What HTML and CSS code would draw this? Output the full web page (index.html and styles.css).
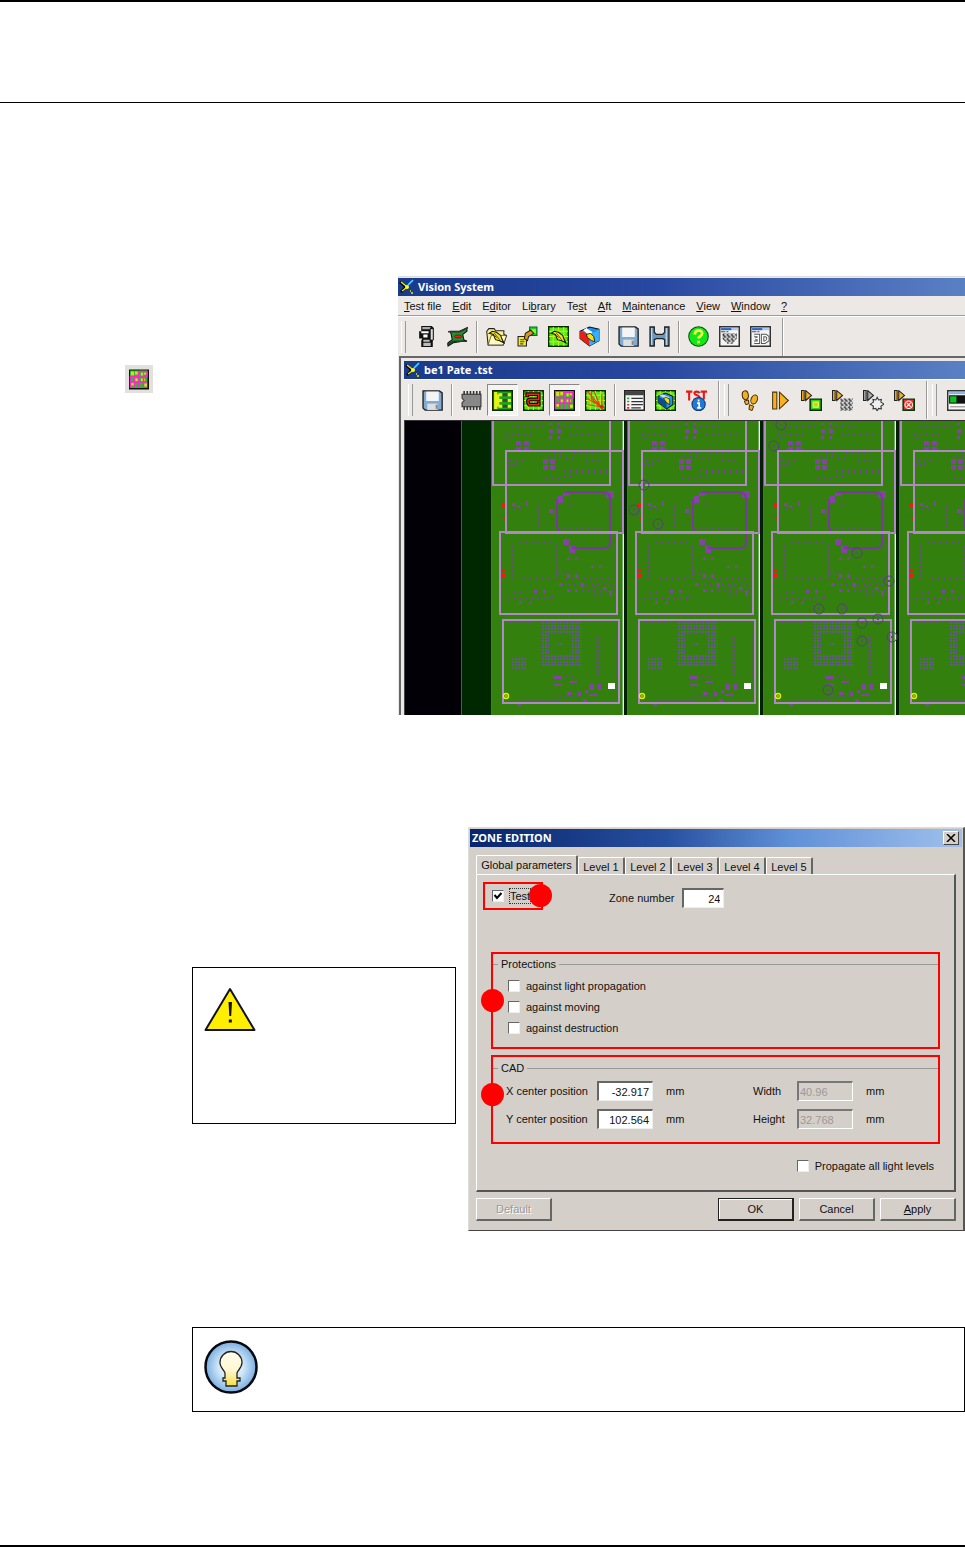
FILE: index.html
```html
<!DOCTYPE html>
<html lang="en">
<head>
<meta charset="utf-8">
<title>Vision System - Zone edition</title>
<link rel="stylesheet" href="styles.css">
</head>
<body>
<svg class="defs" aria-hidden="true">
  <defs>
    <linearGradient id="gBulb" x1="0" y1="0" x2="0" y2="1"><stop offset="0" stop-color="#fffdf0"/><stop offset=".55" stop-color="#fff8d0"/><stop offset="1" stop-color="#f8dc40"/></linearGradient>
    <radialGradient id="gHalo"><stop offset="0" stop-color="#fff"/><stop offset=".5" stop-color="#d0e6f8"/><stop offset="1" stop-color="#78aee0"/></radialGradient>
    <pattern id="pDots" width="3" height="3" patternUnits="userSpaceOnUse"><rect width="2" height="2" fill="#65588a"/></pattern>
    <pattern id="pSpeck" width="4" height="4" patternUnits="userSpaceOnUse"><rect width="4" height="4" fill="#ddd"/><path d="M0 0h1v1h1v1h1v1h-2v-1h-1zM3 0h1v1h-1zM0 3h1v1h-1z" fill="#333"/></pattern>

    <symbol id="i-logo" viewBox="0 0 16 16"><path d="M1 3l6 5-5 5" stroke="#000" stroke-width="2.5" fill="none"/><path d="M8 8l6-6" stroke="#1040c0" stroke-width="3"/><path d="M2 3l5 4M3 12l4-3M12 14h2M11 12h1" stroke="#f0f000" stroke-width="1.4"/><path d="M9 6l5-5" stroke="#40e0ff" stroke-width="1.6"/><circle cx="8" cy="8" r="2" fill="#ffff20"/></symbol>
    <symbol id="i-machine" viewBox="0 0 20 20"><path d="M5 0h10l2 2v11l-1 1v6H5v-6l1-2H3V5h2z" fill="#111"/><path d="M6 1h8l-1 2H6z" fill="#aaa"/><path d="M5 5h7v2H5zM7 8h4v3H7z" fill="#fff"/><path d="M14 3h2v10h-2z" fill="#ddd"/><path d="M7 13h6v2H7zM7 16h7v3H7z" fill="#bbb"/></symbol>
    <symbol id="i-board" viewBox="0 0 20 20"><path d="M3 5h9l7-3v3l-4 3 1 5 2 1-12 2-5 3v-3l4-3-1-5z" fill="#18982c" stroke="#111"/><path d="M1 5.500h11l8-4M0 17.500l6-3h13" stroke="#333" stroke-width="1.500" fill="none"/><ellipse cx="10.500" cy="10" rx="3.500" ry="1.500" fill="#f01818" stroke="#600" stroke-width=".6"/></symbol>
    <symbol id="i-bird" viewBox="0 0 20 20"><path d="M3 7l3-2 4 1 4 3 1 3 2 4-4-2-4-1-2-5z" fill="#f0e020" stroke="#111"/><path d="M8 7l5 6M8 9l2 2" stroke="#333" stroke-width=".8"/></symbol>
    <symbol id="i-open" viewBox="0 0 20 20"><path d="M.7 5l2-2.500h5l1.500 2H17V8l2.500 1-3 9H2z" fill="#f8f090" stroke="#222"/><path d="M2 18l3-9h14.500l-3 9z" fill="#fffac0" stroke="#222" stroke-width=".6"/><use href="#i-bird"/></symbol>
    <symbol id="i-link" viewBox="0 0 20 20"><path d="M12 1h7v8h-7z" fill="#20d020" stroke="#063"/><path d="M14 3h4v4h-4z" fill="#a0f020"/><path d="M1 10h8v9H1z" fill="#f8e828" stroke="#222"/><path d="M3 13h4M3 15h4M3 17h3" stroke="#444"/><path d="M7 12l1-5 5-3 3 3-5 3-1 4z" fill="#d89820" stroke="#222"/></symbol>
    <symbol id="i-grid" viewBox="0 0 20 20"><path d="M.7.700h18.600v18.600H.7z" fill="#58e818" stroke="#0a2a04" stroke-width="1.400"/><path d="M5 1v18M10 1v18M15 1v18M1 5h18M1 10h18M1 15h18" stroke="#b8f818" stroke-width="1"/></symbol>
    <symbol id="i-gridbird" viewBox="0 0 20 20"><use href="#i-grid"/><use href="#i-bird"/></symbol>
    <symbol id="i-books" viewBox="0 0 20 20"><path d="M1 5l9-4 9 2v11l-9 5-9-7z" fill="#1890f0" stroke="#111"/><path d="M1 5l4 1 5 4v9l-9-7z" fill="#e82018"/><path d="M4 4l3-2 6 4-3 3z" fill="#fff"/><path d="M10 9l9-6v11l-9 5z" fill="#38b0f8"/><path d="M7 8l4-1 3 3 1 5-3-1-4-3z" fill="#f0e020" stroke="#111" stroke-width=".8"/></symbol>
    <symbol id="i-disk" viewBox="0 0 20 20"><path d="M1 .8h15.500l2.700 2v16.400H3l-2-2z" fill="#80acd4" stroke="#222" stroke-width="1.300"/><path d="M4 1.500h12v9H4z" fill="#f4f4f4"/><path d="M5 13h10v6H5z" fill="#dcdfe2"/><path d="M13 14h2v4h-2z" fill="#888"/></symbol>
    <symbol id="i-find" viewBox="0 0 20 20"><path d="M1 1h4v5l2 2h6l2-2V1h4v18h-4v-6l-2-1H7l-2 1v6H1z" fill="#6898c0" stroke="#222" stroke-width="1.300"/><path d="M2.500 2v16M16.500 2v16" stroke="#b8d8f0" stroke-width="1.200"/></symbol>
    <symbol id="i-help" viewBox="0 0 20 20"><circle cx="10" cy="10" r="9.300" fill="#10e818" stroke="#174a17"/><path d="M6.500 8c0-5 7-5 7-1 0 3-3.500 2.500-3.500 5M10 14v2.500" stroke="#f8ff50" stroke-width="2.600" fill="none"/></symbol>
    <symbol id="i-window" viewBox="0 0 20 20"><path d="M.7.700h18.600v18.600H.7z" fill="#f4f4f4" stroke="#333" stroke-width="1.400"/><path d="M2 2h10v2H2z" fill="#2860c0"/><path d="M12 2h6v2h-6z" fill="#a8c8e8"/><path d="M2 5.500h4M7 5.500h2" stroke="#444"/></symbol>
    <symbol id="i-winimg" viewBox="0 0 20 20"><use href="#i-window"/><path d="M3 7h14v5l-4 5H8l-5-5z" fill="url(#pSpeck)"/></symbol>
    <symbol id="i-win3d" viewBox="0 0 20 20"><use href="#i-window"/><path d="M4 9h4v6.500H4M5 12h3M12 9v6.500h2l3-2v-3l-2-1.500z" stroke="#555" stroke-width="3.200" fill="none"/><path d="M4 9h4v6.500H4M5 12h3M12 9v6.500h2l3-2v-3l-2-1.500z" stroke="#fff" stroke-width="1.400" fill="none"/></symbol>
    <symbol id="i-chip" viewBox="0 0 20 20"><path d="M3 1v4M6 1v4M9 1v4M12 1v4M15 1v4M18 1v4M3 15v4M6 15v4M9 15v4M12 15v4M15 15v4M18 15v4" stroke="#333" stroke-width="1.500"/><path d="M1 4h18v12H1V12l2-2-2-2z" fill="#888" stroke="#333"/></symbol>
    <symbol id="i-pads" viewBox="0 0 20 20"><path d="M.7.700h18.600v18.600H.7z" fill="#18a818" stroke="#0a2a04" stroke-width="1.400"/><path d="M2 2h3v2l2 1v10l-2 1v2H2z" fill="#e8f018"/><path d="M6 4.500h4M6 10h4M6 15.500h4" stroke="#e8f018" stroke-width="3"/><path d="M10 3h5v3h-5zM10 8.500h5v3h-5zM10 14h5v3h-5z" fill="#444"/><path d="M15 3h3v3h-3zM15 8.500h3v3h-3zM15 14h3v3h-3z" fill="#e8f018"/></symbol>
    <symbol id="i-snake" viewBox="0 0 20 20"><use href="#i-grid"/><path d="M4 7V4h11v5H7c-3 0-3 3-1 5h9v-3" stroke="#200" stroke-width="3.600" fill="none"/><path d="M4 6V4h11v5H7c-3 0-3 3-1 5h9v-2" stroke="#e82818" stroke-width="1.400" fill="none"/></symbol>
    <symbol id="i-zones" viewBox="0 0 20 20"><path d="M0 0h20v20H0z" fill="#111"/><path d="M1 1h17.500v17.500H1z" fill="#28c028"/><path d="M2 2h3v4H2zM6 2h3v3H6zM2 13h3v3H2zM6 9h3v3H6zM12 3h2v3h-2zM15 3h3v2h-3zM12 9h4v3h-4zM15 14h3v3h-3z" fill="#e0d820"/><path d="M1.500 18V7h8V1.500M9.500 2v16M1 12.500h9M5.500 7v11M10 7.500h8.500M10 12.500h8M14.500 8v10M10 2h8v5" stroke="#f828c8" stroke-width="1.500" fill="none"/></symbol>
    <symbol id="i-routes" viewBox="0 0 20 20"><use href="#i-grid"/><path d="M3 2l13 15M9 2l6 15M16 4v12M2 8l14 8M3 14l12 2M6 2v6l8 8" stroke="#f03818" stroke-width="1.100" fill="none"/><circle cx="16" cy="16" r="2" fill="#e02010"/></symbol>
    <symbol id="i-list" viewBox="0 0 20 20"><path d="M.7.700h18.600v18.600H.7z" fill="#f6f6f6" stroke="#222" stroke-width="1.400"/><path d="M1 1h18v4H1z" fill="#444"/><path d="M7 8h11M7 11h11M7 14h11M7 17h9" stroke="#333" stroke-width="1.200"/><path d="M3 8h2M3 11h2" stroke="#20b020" stroke-width="1.500"/><path d="M3 14h2M3 17h2" stroke="#e02020" stroke-width="1.500"/></symbol>
    <symbol id="i-gridbook" viewBox="0 0 20 20"><use href="#i-grid"/><path d="M3 6l7-3 7 3v8l-6 4-8-6z" fill="#2098e8" stroke="#111"/><path d="M3 6l8 5v7l-8-6z" fill="#0c4c90"/><path d="M4 5l3-1 7 3-3 2z" fill="#cde"/><path d="M8 8l3-1 3 2v5l-3-2z" fill="#f0e020" stroke="#111" stroke-width=".7"/></symbol>
    <symbol id="i-tst" viewBox="0 0 20 20"><path d="M0 1.500h6M3 1.500V10M13 3c-1-2-5-2-5 0s5 2 5 4-5 3-5 1M14 1.500h6M17 1.500V9" stroke="#e81818" stroke-width="2" fill="none"/><circle cx="12" cy="13.500" r="6.300" fill="#2078d8" stroke="#103870"/><path d="M12 9v2M10.500 12.500h2v4M10.500 17h4" stroke="#fff" stroke-width="1.600" fill="none"/></symbol>
    <symbol id="i-steps" viewBox="0 0 20 20"><g fill="#f0b020" stroke="#3a2400" stroke-width=".9"><ellipse cx="6" cy="5" rx="2.900" ry="4.200" transform="rotate(-8 6 5)"/><path d="M5 10.500l4-1 .5 3.500-3 1z"/><ellipse cx="14.500" cy="9" rx="3" ry="4.500" transform="rotate(22 14.500 9)"/><path d="M10 14l4 1.500-1.500 4-3-1z"/></g></symbol>
    <symbol id="i-run" viewBox="0 0 20 20"><path d="M2.500 2h4v16h-4zM9 2l8.500 8L9 18z" fill="#f8b020" stroke="#4a3410"/></symbol>
    <symbol id="i-runsm" viewBox="0 0 20 20"><path d="M.5.500h2.500v9.500H.500zM4.500.5l5.500 4.700-5.500 4.800z" fill="#f8b020" stroke="#222"/></symbol>
    <symbol id="i-runzone" viewBox="0 0 20 20"><use href="#i-runsm"/><path d="M8.700 8.700h10.600v10.600H8.700z" fill="#30d020" stroke="#042a04" stroke-width="1.400"/><path d="M11.500 11.500h5v5h-5z" fill="#b0e020" stroke="#f8ff40"/></symbol>
    <symbol id="i-runimg" viewBox="0 0 20 20"><use href="#i-runsm"/><path d="M8 8h12v12H8z" fill="url(#pSpeck)"/></symbol>
    <symbol id="i-runstar" viewBox="0 0 20 20"><path d="M.5.500h2.500v9.500H.500zM4.500.5l5.500 4.700-5.500 4.800z" fill="#aaa" stroke="#222"/><path d="M13.500 7l1.300 2.500 2.700-.5-.5 2.500 3 2-3 2 .5 2.500-2.700-.5-1.300 2.500-1.300-2.500-2.700.5.500-2.500-3-2 3-2-.5-2.500 2.700.5z" fill="#f0f0f0" stroke="#333"/></symbol>
    <symbol id="i-runerr" viewBox="0 0 20 20"><use href="#i-runsm"/><path d="M8.700 8.700h10.600v10.600H8.700z" fill="#e83030" stroke="#063a06" stroke-width="1.400"/><circle cx="14" cy="14" r="3.600" fill="#e83030" stroke="#fff"/><path d="M12 12l4 4M16 12l-4 4" stroke="#fff"/></symbol>
    <symbol id="i-gauge" viewBox="0 0 20 20"><path d="M.7.700h25v18.600H.7z" fill="#f6f6f6" stroke="#333" stroke-width="1.400"/><path d="M2 2h18v2H2z" fill="#88b0e0"/><path d="M2 5h18v8H2z" fill="#111"/><path d="M3 6h6v6H3z" fill="#10c020"/><path d="M3 16h16" stroke="#888"/></symbol>

    <g id="panel">
      <path d="M1 0h131v294H1z" fill="#33800f"/>
      <path d="M0 0h1v294H0z" fill="#109c10"/>
      <path d="M131 0h1v294h-1z" fill="#78a868"/>
      <path d="M133 0h3v294h-3z" fill="#032006"/>
      <g fill="none" stroke="#764496" stroke-width="2">
        <g stroke-dasharray="1 2">
          <path d="M18 5h34M15 13h30M67 6h28M14 17h9M80 31h24M16 39h20M75 37h12M92 40h19M57 35h16M70 55h12M60 31h14M52 57h20"/>
          <path d="M29 121h32M30 158h30M20 171h14M58 175h8M64 151h10M100 166h8M100 173h14M20 87h12M76 83h8M16 202h22M60 256h26"/>
        </g>
        <g stroke-dasharray="1 5">
          <path d="M70 11h48M76 18h40M72 25h44M79 14h36M68 44h50M73 49h45M79 52h38M66 61h50M52 64h18M76 71h36M74 91h14M76 99h12M73 107h42"/>
          <path d="M72 133h50M76 139h44M70 147h50M75 157h46M71 164h50M79 170h44M17 178h48M92 181h30M96 128h24M102 151h20M24 28h24M14 61h38M18 98h40M50 103h16M86 187h32"/>
        </g>
        <g stroke-dasharray="1 3">
          <path d="M17 44h12M16 52h23M18 58h15M24 72h14M30 80h8M82 84h20M41 42v24M41 74v32M57 70v22M62 78v18M86 88v22M112 88v22M104 88h4M48 85v22"/>
          <path d="M22 125v34M66 125v34M16 206v8M16 236h20M118 146v32M106 130v40M72 150v34M78 160h16M94 178h18M28 88v22M33 74v14M44 168v12M38 216v16M98 212v24"/>
          <path d="M18 48h22M70 124v40M90 126v60M96 134v48M112 132v50M124 150v40M54 164v18M34 172v12"/>
        </g>
        <g stroke-width="3" stroke-dasharray="2 2"><path d="M107 216v41M127 214v43"/></g>
        <path d="M30 279h38M66 275h22M94 281h26" stroke-width="1" stroke-dasharray="2 1"/>
      </g>
      <path d="M50 200h41v45H50z" fill="url(#pDots)"/><path d="M58 212h22v22H58z" fill="#33800f"/><path d="M66 221h6v3h-6z" fill="url(#pDots)"/>
      <path d="M20 236h15v12H20z" fill="url(#pDots)"/>
      <g fill="#8444a4">
        <path d="M25 20h5v4h-5zM33 20h5v4h-5zM25 26h5v3h-5zM33 26h5v3h-5zM58 8h4v4h-4zM66 8h4v4h-4zM58 15h3v3h-3zM66 15h3v3h-3zM58 2h3v2h-3zM66 2h3v2h-3zM52 38h5v5h-5zM59 38h5v5h-5zM52 44h5v5h-5zM59 44h5v5h-5z"/>
        <path d="M72 70h6v5h-6zM66 75h6v7h-6zM115 70h8v7h-8zM72 118h6v6h-6zM78 125h6v7h-6zM58 88h4v4h-4zM21 82h4v3h-4zM27 84h2v3h-2zM35 80h2v5h-2z"/>
        <path d="M76 136h3v3h-3zM84 136h3v3h-3zM76 153h3v4h-3zM84 153h3v4h-3zM68 162h3v3h-3zM76 168h3v3h-3zM84 168h3v3h-3zM100 144h3v3h-3zM108 144h3v3h-3zM43 169h3v3h-3zM52 169h3v3h-3zM112 166h3v3h-3zM118 170h3v5h-3zM90 162h3v4h-3zM28 180h3v3h-3zM38 181h3v2h-3z"/>
        <path d="M63 255h8v3h-8zM63 263h8v2h-8zM78 260h8v2h-8zM99 263h4v6h-4zM107 263h3v6h-3zM76 271h4v3h-4zM87 271h3v4h-3zM98 273h8v2h-8zM92 278h4v3h-4zM94 269h3v3h-3zM26 283h4v2h-4z"/>
      </g>
      <path d="M73 71H112q7 0 7 7v44q0 5-5 5H81M66 78v28l3 6" fill="none" stroke="#7c38a0" stroke-width="2"/>
      <g fill="none" stroke="#b088c4" stroke-width="2">
        <path d="M2 0v64h117V0"/>
        <rect x="15" y="30" width="117" height="82"/>
        <rect x="9" y="111" width="117" height="82"/>
        <rect x="12" y="199" width="116" height="83"/>
      </g>
      <path d="M15 111h112v2H15z" fill="#b088c4"/>
      <path d="M10 82h4v4h-4zM10 93h1v3h-1zM13 96h1v3h-1zM11 148h3v3h-3zM11 153h3v3h-3z" fill="#f01818"/>
      <path d="M117 262h7v6h-7z" fill="#fff"/>
      <circle cx="15" cy="275" r="2.500" fill="none" stroke="#e8f000" stroke-width="1.400"/><path d="M14 275h2" stroke="#e8f000"/>
    </g>
    <g id="fid"><circle r="5" fill="none" stroke="#554080"/><path d="M-1 0h2" stroke="#6c4488" stroke-width="2"/></g>
  </defs>
</svg>

<div class="page">
  <header class="page-head"></header>
  <main class="content">
    <section class="row">
      <aside class="margin-note"><span class="margin-icon"><svg width="21" height="21"><use href="#i-zones"/></svg></span></aside>
      <div class="app">
        <div class="titlebar"><svg width="16" height="16"><use href="#i-logo"/></svg><span>Vision System</span></div>
        <nav class="menu">
          <button type="button"><u>T</u>est file</button><button type="button"><u>E</u>dit</button><button type="button">E<u>d</u>itor</button><button type="button">Li<u>b</u>rary</button><button type="button">Te<u>s</u>t</button><button type="button"><u>A</u>ft</button><button type="button"><u>M</u>aintenance</button><button type="button"><u>V</u>iew</button><button type="button"><u>W</u>indow</button><button type="button"><u>?</u></button>
        </nav>
        <div class="toolbar">
          <i class="grip"></i>
          <button type="button" aria-label="Machine"><svg><use href="#i-machine"/></svg></button>
          <button type="button" aria-label="Board"><svg><use href="#i-board"/></svg></button>
          <i class="sep"></i>
          <button type="button" aria-label="Open"><svg><use href="#i-open"/></svg></button>
          <button type="button" aria-label="Import"><svg><use href="#i-link"/></svg></button>
          <button type="button" aria-label="Edit board"><svg><use href="#i-gridbird"/></svg></button>
          <button type="button" aria-label="Library"><svg><use href="#i-books"/></svg></button>
          <i class="sep"></i>
          <button type="button" aria-label="Save"><svg><use href="#i-disk"/></svg></button>
          <button type="button" aria-label="Find"><svg><use href="#i-find"/></svg></button>
          <i class="sep"></i>
          <button type="button" aria-label="Help"><svg><use href="#i-help"/></svg></button>
          <button type="button" aria-label="Image window"><svg><use href="#i-winimg"/></svg></button>
          <button type="button" aria-label="3D window"><svg><use href="#i-win3d"/></svg></button>
          <i class="sep sep-end"></i>
        </div>
        <div class="child">
          <div class="titlebar"><svg width="16" height="16"><use href="#i-logo"/></svg><span>be1 Pate .tst</span></div>
          <div class="toolbar toolbar-child">
            <i class="grip"></i>
            <button type="button" aria-label="Save test"><svg><use href="#i-disk"/></svg></button>
            <i class="sep"></i>
            <button type="button" aria-label="Component"><svg><use href="#i-chip"/></svg></button>
            <button type="button" class="pressed" aria-label="Pads"><svg><use href="#i-pads"/></svg></button>
            <button type="button" aria-label="Path"><svg><use href="#i-snake"/></svg></button>
            <button type="button" class="pressed" aria-label="Zones"><svg><use href="#i-zones"/></svg></button>
            <button type="button" aria-label="Routes"><svg><use href="#i-routes"/></svg></button>
            <i class="sep"></i>
            <button type="button" aria-label="List"><svg><use href="#i-list"/></svg></button>
            <button type="button" aria-label="Board library"><svg><use href="#i-gridbook"/></svg></button>
            <button type="button" aria-label="Test information"><svg><use href="#i-tst"/></svg></button>
            <i class="sep sep-end"></i><i class="grip"></i>
            <button type="button" aria-label="Step"><svg><use href="#i-steps"/></svg></button>
            <button type="button" aria-label="Run"><svg><use href="#i-run"/></svg></button>
            <button type="button" aria-label="Run zone"><svg><use href="#i-runzone"/></svg></button>
            <button type="button" aria-label="Run image"><svg><use href="#i-runimg"/></svg></button>
            <button type="button" aria-label="Run star"><svg><use href="#i-runstar"/></svg></button>
            <button type="button" aria-label="Run errors"><svg><use href="#i-runerr"/></svg></button>
            <i class="sep sep-end"></i><i class="grip"></i>
            <button type="button" aria-label="Progress"><svg><use href="#i-gauge"/></svg></button>
          </div>
          <svg class="board" role="img" aria-label="Board view">
            <path d="M0 0h56v294H0z" fill="#020006"/><path d="M57 0h29v294H57z" fill="#002800"/><path d="M56 0h1v294h-1z" fill="#108810"/>
            <use href="#panel" x="86"/><use href="#panel" x="222"/><use href="#panel" x="358"/><use href="#panel" x="494"/>
            <use href="#fid" x="229" y="89"/><use href="#fid" x="253" y="103"/><use href="#fid" x="239" y="64"/>
            <use href="#fid" x="376" y="4"/><use href="#fid" x="369" y="25"/><use href="#fid" x="452" y="132"/><use href="#fid" x="484" y="160"/><use href="#fid" x="414" y="188"/><use href="#fid" x="437" y="188"/><use href="#fid" x="457" y="202"/><use href="#fid" x="473" y="198"/><use href="#fid" x="457" y="220"/><use href="#fid" x="487" y="216"/><use href="#fid" x="423" y="269"/>
          </svg>
        </div>
      </div>
    </section>

    <section class="row row-dialog">
      <aside class="note note-warning">
        <svg width="54" height="46" viewBox="0 0 54 46" role="img" aria-label="Warning"><path d="M26 2L50.500 43H1.500z" fill="#ffee00" stroke="#10102a" stroke-width="2" stroke-linejoin="round"/><path d="M24.500 15h3.500l-.8 14h-1.900zM24.800 32.500h3v3h-3z" fill="#111"/></svg>
      </aside>
      <form class="dialog">
        <div class="titlebar titlebar-dialog"><span>ZONE EDITION</span><button type="button" class="close" aria-label="Close"><svg width="10" height="8" viewBox="0 0 10 8"><path d="M1 0l8 8M9 0L1 8" stroke="#000" stroke-width="1.500"/></svg></button></div>
        <div class="tabs">
          <button type="button" class="tab tab-active">Global parameters</button><button type="button" class="tab">Level 1</button><button type="button" class="tab">Level 2</button><button type="button" class="tab">Level 3</button><button type="button" class="tab">Level 4</button><button type="button" class="tab">Level 5</button>
        </div>
        <div class="sheet">
          <div class="top-line">
            <div class="callout callout-test"><label class="check"><input type="checkbox" checked><span class="focus">Test</span></label><b class="dot dot-right"></b></div>
            <label class="zone" for="zone">Zone number</label><input class="field field-short" id="zone" value="24">
          </div>
          <div class="callout callout-protect">
            <fieldset><legend>Protections</legend>
              <div class="checks">
                <label class="check"><input type="checkbox"><span>against light propagation</span></label>
                <label class="check"><input type="checkbox"><span>against moving</span></label>
                <label class="check"><input type="checkbox"><span>against destruction</span></label>
              </div>
            </fieldset><b class="dot"></b>
          </div>
          <div class="callout callout-cad">
            <fieldset><legend>CAD</legend>
              <div class="cad">
                <label for="cx">X center position</label><input class="field" id="cx" value="-32.917"><span>mm</span><label for="w">Width</label><input class="field" id="w" value="40.96" disabled><span>mm</span>
                <label for="cy">Y center position</label><input class="field" id="cy" value="102.564"><span>mm</span><label for="h">Height</label><input class="field" id="h" value="32.768" disabled><span>mm</span>
              </div>
            </fieldset><b class="dot"></b>
          </div>
          <label class="check propagate"><input type="checkbox"><span>Propagate all light levels</span></label>
        </div>
        <div class="actions">
          <button type="button" class="btn btn-default" disabled>Default</button>
          <button type="button" class="btn btn-ok">OK</button><button type="button" class="btn">Cancel</button><button type="button" class="btn"><u>A</u>pply</button>
        </div>
      </form>
    </section>

    <aside class="note note-tip">
      <svg width="54" height="54" viewBox="0 0 54 54" role="img" aria-label="Tip"><circle cx="27" cy="27" r="25.500" fill="url(#gHalo)" stroke="#080810" stroke-width="2.500"/><path d="M21 38v-5c0-2-5-5-5-10.500a11 11 0 0 1 22 0c0 5.500-5 8.500-5 10.500v5h3v3h-3v5H22v-5h-3v-3z" fill="url(#gBulb)" stroke="#222" stroke-width="1.300"/></svg>
    </aside>
  </main>
</div>
</body>
</html>
```
FILE: styles.css
```css
* { box-sizing: border-box; }
body { margin: 0; background: #fff; color: #111; font: 11px/14px "Liberation Sans", Arial, sans-serif; }
button, input { font: inherit; color: inherit; margin: 0; }
.defs { position: absolute; width: 0; height: 0; }
.page { min-height: 100vh; display: flex; flex-direction: column; border-top: 2px solid #000; border-bottom: 2px solid #000; }
.page-head { height: 101px; border-bottom: 1px solid #000; }
.content { padding: 173px 0 132px; }
.row { display: flex; }
.margin-note { flex: 0 0 398px; padding: 89px 0 0 125px; }
.margin-icon { display: flex; width: 28px; height: 28px; padding: 4px; background: #e4e0dd; }

.app { flex: 1; min-width: 0; overflow: hidden; background: #ebe8e5; border-top: 1px solid #ddd; }
.titlebar { display: flex; align-items: center; gap: 3px; height: 18px; padding-left: 1px; color: #fff; font: bold 11px/16px "Noto Sans", sans-serif; background: linear-gradient(90deg, #1a3a8c, #2848a0 45%, #5a80c4); white-space: nowrap; }
.app > .titlebar { border-top: 1px solid #e8e8e8; height: 19px; }
.menu { display: flex; gap: 11px; height: 20px; padding-left: 6px; border-bottom: 1px solid #9a9aa0; }
.menu button { padding: 0; border: 0; background: none; white-space: nowrap; }
.toolbar { display: flex; align-items: center; height: 40px; padding-left: 3px; border-top: 1px solid #fff; }
.toolbar button { flex: 0 0 31px; height: 32px; padding: 0; border: 0; background: none; display: flex; align-items: center; justify-content: center; }
.toolbar button svg { width: 21px; height: 21px; overflow: visible; }
.toolbar .pressed { border: 1px solid; border-color: #888 #fff #fff #888; background: #f6f4f2; }
.grip { flex: 0 0 10px; height: 32px; }
.grip::before { content: ""; display: block; width: 3px; height: 32px; border-left: 1px solid #fff; border-right: 1px solid #999; }
.sep { flex: 0 0 8px; height: 32px; }
.sep::before { content: ""; display: block; width: 0; height: 32px; margin-left: 3px; border-left: 1px solid #999; border-right: 1px solid #fff; }
.sep-end { height: 38px; }
.sep-end::before { height: 38px; margin-left: 6px; }
.child { margin-left: 1px; padding: 3px 0 0 3px; border-top: 2px solid #666; border-left: 2px solid #666; }
.toolbar-child { height: 41px; padding-left: 4px; }
.toolbar-child .grip { flex-basis: 9px; }
.toolbar-child .sep + .grip { flex-basis: 14px; padding-left: 4px; }
.board { display: block; width: 100%; height: 295px; border-left: 1px solid #444; border-top: 1px solid #333; }

.row-dialog { gap: 12px; padding-left: 192px; margin-top: 112px; align-items: flex-start; }
.note { border: 1px solid #000; }
.note svg { display: block; }
.note-warning { flex: 0 0 264px; height: 157px; margin-top: 140px; padding: 19px 11px; }
.note-tip { margin: 96px 0 0 192px; min-height: 85px; padding: 12px 11px; }

.dialog { flex: 1; min-width: 0; padding: 1px 7px 9px; background: #d5cfc9; border: 1px solid; border-color: #ddd #555 #444 #ddd; border-right-width: 2px; }
.titlebar-dialog { margin: 0 -6px; padding: 0 3px 0 2px; justify-content: space-between; background: linear-gradient(90deg, #08246b, #2850a0 40%, #6090d8 65%, #a0c0ec); }
.close { width: 16px; height: 14px; padding: 0; display: flex; align-items: center; justify-content: center; background: #d5cfc9; border: 1px solid; border-color: #fff #444 #444 #fff; }
.tabs { display: flex; align-items: flex-end; margin-top: 8px; height: 19px; }
.tab { height: 17px; width: 47px; padding: 1px 0 0; text-align: center; background: none; border: solid; border-width: 1px 2px 0 1px; border-color: #fff #666 #fff #fff; border-radius: 2px 2px 0 0; white-space: nowrap; }
.tab-active { height: 19px; width: 102px; padding: 0; }
.sheet { border: solid; border-width: 1px 2px 2px 1px; border-color: #fff #555 #555 #fff; padding: 7px 14px 17px; }
.top-line { display: flex; align-items: flex-start; margin-left: -8px; }
.callout { position: relative; border: 2px solid #f00; }
.callout-test { width: 60px; height: 28px; padding: 5px 7px; }
.dot { position: absolute; left: -12px; top: 50%; width: 23px; height: 23px; margin-top: -12px; border-radius: 50%; background: #f00; }
.dot-right { left: auto; right: -11px; }
.callout-cad .dot { top: 45%; }
.check { display: flex; align-items: center; gap: 6px; height: 14px; white-space: nowrap; }
.check input { appearance: none; width: 12px; height: 12px; background: #fff; border: 1px solid; border-color: #666 #eee #eee #666; }
.check input:checked { background: #fff url("data:image/svg+xml,%3Csvg xmlns='http://www.w3.org/2000/svg' viewBox='0 0 10 10'%3E%3Cpath d='M1.500 4l2.500 3 4.500-5' fill='none' stroke='%23000' stroke-width='2'/%3E%3C/svg%3E"); }
.focus { outline: 1px dotted #333; }
.zone { margin: 9px 8px 0 66px; }
.field { width: 56px; height: 20px; padding: 0 3px; text-align: right; background: #fff; border: solid; border-width: 2px 1px 1px 2px; border-color: #666 #eee #eee #666; border-radius: 0; }
.field:disabled { background: #d5cfc9; color: #999; text-align: left; padding: 0 1px; border-color: #777 #fff #fff #777; }
.field-short { width: 42px; margin-top: 6px; }
.callout-protect { height: 97px; margin-top: 42px; padding: 3px 0; }
.callout-cad { height: 89px; margin-top: 6px; padding: 4px 0 0; }
fieldset { margin: 0; padding: 0; min-width: 0; border: 1px solid #999; border-width: 1px 0 0; }
legend { margin-left: 5px; padding: 0 3px; }
.checks { display: flex; flex-direction: column; gap: 7px; padding: 8px 15px 0; }
.cad { display: grid; grid-template-columns: 91px 56px 100px 44px 56px auto; grid-auto-rows: 20px; row-gap: 8px; padding: 6px 0 0 13px; align-items: center; }
.cad span { padding-left: 13px; }
.propagate { justify-content: flex-end; margin: 15px 6px 0 0; }
.actions { display: flex; gap: 5px; margin-top: 6px; }
.btn { width: 76px; height: 23px; padding: 0; background: #d5cfc9; border: solid; border-width: 1px 2px 2px 1px; border-color: #fff #666 #666 #fff; }
.btn-default { margin-right: auto; }
.btn:disabled { color: #999; text-shadow: 1px 1px #fff; }
.btn-ok { border-color: #222; box-shadow: inset 1px 1px #fff; }
```
